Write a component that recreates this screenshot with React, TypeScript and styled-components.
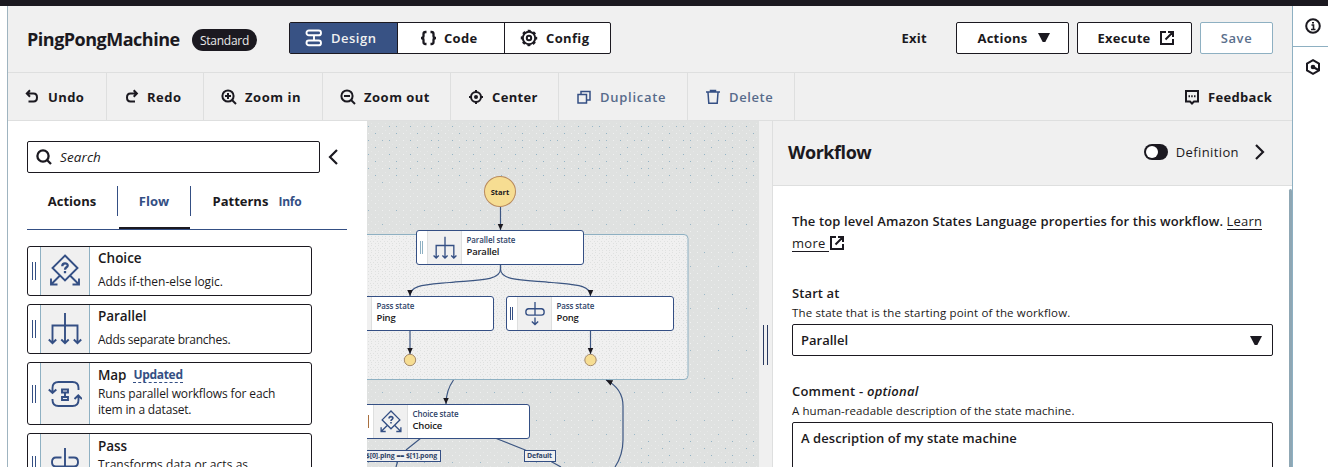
import React from "react";
import styled, { createGlobalStyle, css } from "styled-components";

const ink = "#1b1920";
const navy = "#344f84";
const mist = "#8eb0c2";
const panel = "#f0f0f0";
const line = "#dedfdf";

const GlobalStyle = createGlobalStyle`
  * { box-sizing: border-box; }
  html, body { margin: 0; padding: 0; }
  body {
    width: 1328px; height: 467px; overflow: hidden; background: #fff; color: ${ink};
    font-family: "Open Sans", "Noto Sans", sans-serif;
  }
  svg { display: block; flex: none; }
`;

const Text = styled.span<{ $size?: number; $weight?: number; $track?: number; $color?: string; $italic?: boolean; $lh?: number }>`
  font-size: ${(p) => p.$size ?? 13}px;
  font-weight: ${(p) => p.$weight ?? 700};
  letter-spacing: ${(p) => p.$track ?? 0}px;
  color: ${(p) => p.$color ?? ink};
  font-style: ${(p) => (p.$italic ? "italic" : "normal")};
  line-height: ${(p) => p.$lh ?? 20}px;
  white-space: nowrap;
`;

const Page = styled.div`
  display: flex; flex-direction: column; width: 1328px; height: 467px; overflow: hidden;
`;
const TopStrip = styled.div`flex: 0 0 6px; background: ${ink};`;
const Columns = styled.div`display: flex; flex: 1; min-height: 0; padding-left: 7px;`;
const Studio = styled.main`
  display: flex; flex-direction: column; width: 1286px; min-height: 0;
  border-left: 1px solid #9fb4c0; border-right: 1px solid ${mist}; background: ${panel};
`;
const Rail = styled.aside`flex: 1; background: #fff;`;
const RailItem = styled.div<{ $ruled?: boolean }>`
  display: flex; align-items: center; justify-content: center; height: ${(p) => (p.$ruled ? 41 : 39)}px; padding-left: 5px;
  ${(p) => p.$ruled && css`border-bottom: 1px solid ${mist};`}
`;

const Header = styled.header`
  display: flex; align-items: center; flex: 0 0 67px; padding: 0 19px 3px 19px;
  border-bottom: 1px solid ${line};
`;
const Title = styled.h1`
  margin: 0; width: 165px; font-size: 18px; line-height: 24px; font-weight: 700; letter-spacing: -0.5px; white-space: nowrap;
  padding-top: 2px;
`;
const Badge = styled.span`
  display: flex; align-items: center; justify-content: center; width: 65px; height: 22px; margin-top: 4px; padding-top: 1px;
  border-radius: 11px; background: ${ink}; color: #e9e9e9; font-size: 12px; letter-spacing: -0.25px;
`;
const Segments = styled.div`
  display: flex; height: 32px; width: 322px; margin-left: 32px; border: 1px solid ${ink}; border-radius: 2px; background: #fff;
`;
const Segment = styled.button<{ $w: number; $active?: boolean }>`
  display: flex; align-items: center; gap: 8px; width: ${(p) => p.$w}px; padding: 0 0 0 15px; border: 0;
  color: ${ink}; font-family: inherit; background: ${(p) => (p.$active ? "#385284" : "transparent")};
  & + & { border-left: 1px solid ${ink}; }
`;
const HeaderActions = styled.div`display: flex; align-items: center; gap: 8px; margin-left: auto;`;
const Exit = styled.div`margin-right: 21px; display: flex;`;
const Button = styled.button<{ $w: number; $muted?: boolean; $gap?: number; $inset?: number }>`
  display: flex; align-items: center; justify-content: center; gap: ${(p) => p.$gap ?? 9}px; width: ${(p) => p.$w}px; height: 32px;
  padding: 0 0 0 ${(p) => p.$inset ?? 0}px;
  background: #fff; border: 1px solid ${(p) => (p.$muted ? mist : ink)}; border-radius: 2px; font-family: inherit;
`;

const Toolbar = styled.nav`
  display: flex; flex: 0 0 48px; border-bottom: 1px solid ${line};
`;
const Tool = styled.div<{ $w: number; $gap?: number }>`
  display: flex; align-items: center; gap: ${(p) => p.$gap ?? 8}px; flex: 0 0 ${(p) => p.$w}px; padding: 1px 0 0 17px; border-right: 1px solid ${line};
`;
const Feedback = styled.div`display: flex; align-items: center; gap: 8px; margin-left: auto; padding: 1px 20px 0 0;`;

const Body = styled.div`display: flex; flex: 1; min-height: 0;`;
const Library = styled.section`flex: 0 0 359px; background: #fff; padding: 20px 20px 0 19px; overflow: hidden;`;
const SearchRow = styled.div`display: flex; align-items: center; gap: 8px;`;
const SearchBox = styled.div`
  display: flex; align-items: center; gap: 8px; width: 293px; height: 32px; padding-left: 8px;
  border: 1px solid ${ink}; border-radius: 2px;
`;
const Tabs = styled.div`
  display: flex; height: 57px; border-bottom: 1px solid ${navy}; padding-top: 13px; width: 320px;
`;
const Tab = styled.div<{ $w: number; $active?: boolean }>`
  display: flex; align-items: flex-start; justify-content: center; width: ${(p) => p.$w}px; padding-top: 5px; gap: 10px;
  background-image: ${(p) => (p.$active
    ? `linear-gradient(${navy}, ${navy}), linear-gradient(${navy}, ${navy}), linear-gradient(${ink}, ${ink})`
    : "none")};
  background-repeat: no-repeat;
  background-size: 1px 30px, 1px 30px, 71px 2px;
  background-position: 0 0, 100% 0, 2px 100%;
`;
const Cards = styled.div`display: flex; flex-direction: column; gap: 8px; margin-top: 16px;`;
const Card = styled.article<{ $h: number }>`
  display: flex; flex: none; width: 285px; height: ${(p) => p.$h}px; border: 1px solid ${ink}; border-radius: 3px; overflow: hidden;
`;
const Grip = styled.div<{ $gap?: number; $h?: number; $color?: string }>`
  width: ${(p) => (p.$gap ?? 2) + 2}px; height: ${(p) => p.$h ?? 18}px;
  border-left: 1px solid ${(p) => p.$color ?? navy}; border-right: 1px solid ${(p) => p.$color ?? navy};
`;
const GripCell = styled.div`display: flex; flex: 0 0 12px; align-items: center; padding-left: 4px;`;
const IconCell = styled.div`
  display: flex; flex: 0 0 50px; align-items: center; justify-content: center; background: ${panel};
  border-left: 1px solid ${mist}; border-right: 1px solid ${mist};
`;
const CardText = styled.div<{ $tight?: boolean }>`
  display: flex; flex-direction: column; gap: ${(p) => (p.$tight ? 2 : 4)}px; padding: ${(p) => (p.$tight ? 2 : 1)}px 0 0 8px;
`;
const CardTitle = styled.div`display: flex; align-items: center; gap: 8px; height: 19px;`;
const Updated = styled.span`
  color: ${navy}; font-size: 12px; font-weight: 700; line-height: 14px; border-bottom: 1px dashed ${navy};
  letter-spacing: -0.3px; margin: 2px 0 0 -1px;
`;

const Canvas = styled.section`position: relative; flex: 0 0 392px; overflow: hidden; background: #dfe1e0;`;
const Layer = styled.svg`position: absolute; inset: 0;`;
const Node = styled.div<{ $x: number; $y: number }>`
  position: absolute; left: ${(p) => p.$x}px; top: ${(p) => p.$y}px; width: 168px; height: 35px;
  display: flex; background: #fff; border: 1px solid ${navy}; border-radius: 3px; overflow: hidden;
`;
const NodeGrip = styled.div`display: flex; align-items: center; flex: 0 0 10px; padding-left: 3px;`;
const NodeIcon = styled.div`
  display: flex; flex: 0 0 35px; align-items: center; justify-content: center; background: ${panel};
  border: solid ${line}; border-width: 0 1px;
`;
const NodeText = styled.div`display: flex; flex-direction: column; padding: 3px 0 0 4.5px;`;
const Start = styled.div`
  position: absolute; left: 117px; top: 55px; width: 32px; height: 31px; border-radius: 50%;
  display: flex; align-items: center; justify-content: center; background: #f6dd92; border: 1px solid #b98a5c;
`;
const EdgeLabel = styled.div<{ $x: number; $w: number }>`
  position: absolute; left: ${(p) => p.$x}px; top: 329px; width: ${(p) => p.$w}px; height: 12px;
  display: flex; align-items: center; justify-content: flex-end; padding-right: 3px; background: ${panel}; border: 1px solid ${navy};
`;

const Splitter = styled.div`
  display: flex; flex: 0 0 14px; justify-content: center; padding: 204px 2px 0 2px; background: ${panel}; border-right: 1px solid ${line};
`;
const Inspector = styled.section`display: flex; flex-direction: column; flex: 1; min-width: 0; background: #fff;`;
const InspectorHead = styled.div`
  display: flex; align-items: center; flex: 0 0 65px; padding: 0 26px 2px 15px; background: ${panel}; border-bottom: 1px solid ${line};
`;
const HeadRight = styled.div`display: flex; align-items: center; margin-left: auto; gap: 8px;`;
const Toggle = styled.span`
  display: flex; width: 24px; height: 16px; padding: 2px; border-radius: 8px; background: ${ink};
  &::before { content: ""; width: 12px; height: 12px; border-radius: 50%; background: #fff; }
`;
const Scroller = styled.div`display: flex; flex: 1; min-height: 0; overflow: hidden;`;
const Fields = styled.div`flex: 1; padding: 24px 0 0 19px;`;
const ScrollThumb = styled.div`flex: 0 0 3px; margin-top: 3px; background: #8fa7b4; border-radius: 2px 2px 0 0;`;
const Paragraph = styled.p`margin: 0 0 29px; line-height: 22px; display: flex; flex-direction: column;`;
const ParaLine = styled.span<{ $gap: number }>`display: flex; align-items: center; height: 22px; gap: ${(p) => p.$gap}px;`;
const Link = styled.span`border-bottom: 1px solid ${ink}; display: inline-flex; height: 18px; align-items: center;`;
const Field = styled.div`display: flex; flex-direction: column; width: 481px; margin-bottom: 25px;`;
const Select = styled.div`
  display: flex; align-items: center; justify-content: space-between; height: 32px; padding: 0 10px 0 8px; margin-top: 2px;
  border: 1px solid ${ink}; border-radius: 2px;
`;
const TextArea = styled.div`height: 80px; margin-top: 2px; padding: 3px 8px; border: 1px solid ${ink}; border-radius: 2px;`;

type IconProps = { size?: number; color?: string; width?: number };
const Glyph = ({ size = 16, color = ink, width = 2, children }: IconProps & { children: React.ReactNode }) => (
  <svg width={size} height={size} viewBox="0 0 16 16" fill="none" stroke={color} strokeWidth={width}>{children}</svg>
);
const External = () => (
  <Glyph><path d="M7 2H2v12h12V9M9 2h5v5M14 2 6.500 9.500" /></Glyph>
);
const Caret = () => (<svg width="12" height="9"><path d="M0 0h12L7.300 9H4.700z" fill={ink} /></svg>);
const Magnifier = ({ width = 2, children }: { width?: number; children?: React.ReactNode }) => (
  <Glyph width={width}><circle cx="7" cy="7" r="5.600" /><path d="m11 11 4 4" />{children}</Glyph>
);

const ParallelArt = ({ s = 34 }: { s?: number }) => (
  <svg width={s} height={s} viewBox="0 0 34 34" fill="none" stroke={navy} strokeWidth="1.900">
    <path d="M17 1v30M4.500 31V13.500h25V31M.8 27.500l3.700 3.700 3.700-3.700M13.300 27.500l3.700 3.700 3.700-3.700M25.800 27.500l3.700 3.700 3.700-3.700" />
  </svg>
);
const ChoiceArt = ({ s = 34 }: { s?: number }) => (
  <svg width={s} height={s} viewBox="0 0 34 34" fill="none" stroke={navy} strokeWidth="1.900">
    <path d="M17 1.500 29.500 14 17 26.500 4.500 14zM12 21.500l-9 9M3 24.500v6h6.500M22 21.500l9 9M31 24.500v6h-6.500" />
    <path d="M14.300 12.200c0-3.700 5.400-3.500 5.400-.8 0 2-2.700 1.700-2.700 4.300M17 17v2.200" strokeWidth="2.300" />
  </svg>
);
const MapArt = () => (
  <svg width="34" height="34" viewBox="0 0 34 34" fill="none" stroke={navy} strokeWidth="1.900">
    <path d="M30.500 13V11q0-6-6-6H10.500q-6 0-6 6v4.500M.8 12.500l3.700 3.500 3.800-3.500M4.500 22v1q0 6 6 6h14q6 0 6-6V18M26.500 22l3.800-3.700L34 22" />
    <path d="M14 12.500h6v3h-6zM14 20h6v3h-6zM17 15.500V20" />
  </svg>
);
const PassArt = ({ s = 34, closed }: { s?: number; closed?: boolean }) => (
  <svg width={s} height={s} viewBox="0 0 34 34" fill="none" stroke={navy} strokeWidth="1.900">
    <path d={closed
      ? "M17 0v18.500M8 9.500q-4 0-4 4.500t4 4.500h18q4 0 4-4.500t-4-4.500zM17 22v10M12.500 27.500 17 32l4.500-4.500"
      : "M17 0v18.500M13.500 9.500H8q-4 0-4 4.500t4 4.500h18q4 0 4-4.500t-4-4.500h-5.500M17 22v10M12.500 27.500 17 32l4.500-4.500"} />
  </svg>
);

const tools = [
  { label: "Undo", w: 99, gap: 7, track: 0.4, icon: <Glyph><path d="M2 4.500h6.500Q12 4.500 12 8.500t-3.500 4H3.500M5 1.200 1.800 4.500 5 7.800" /></Glyph> },
  { label: "Redo", w: 97, gap: 7, track: 0.5, icon: <Glyph><path d="M12.500 4.500H6.500Q3 4.500 3 8.500t3.500 4H11M9.700 1.200l3.200 3.300-3.200 3.300" /></Glyph> },
  { label: "Zoom in", w: 119, track: 0.55, icon: <Magnifier><path d="M4 7h6M7 4v6" /></Magnifier> },
  { label: "Zoom out", w: 128, track: 0.5, icon: <Magnifier><path d="M4 7h6" /></Magnifier> },
  { label: "Center", w: 108, track: 0.35, icon: <Glyph><circle cx="8" cy="8" r="5" /><circle cx="8" cy="8" r="2" fill={ink} stroke="none" /><path d="M8 1v3M8 12v3M1 8h3M12 8h3" /></Glyph> },
  { label: "Duplicate", w: 129, track: 0.72, muted: true, icon: <Glyph color={navy} width={1.500}><path d="M2 5.500h8.500V14H2zM5 5.500V2.500h9V11h-3.500" /></Glyph> },
  { label: "Delete", w: 107, track: 0.6, muted: true, icon: <Glyph color={navy} width={1.500}><path d="M1 3h14M5.500 3V1.500h5V3M3 3.500l.8 10.700h8.400L13 3.500" /></Glyph> },
];

const Lines = styled.div`display: flex; flex-direction: column;`;

type StateNode = { x: number; y: number; kind: string; name: string; art: React.ReactNode; grip?: string };
const nodes: StateNode[] = [
  { x: 49, y: 109, kind: "Parallel state", name: "Parallel", art: <ParallelArt s={24} />, grip: mist },
  { x: -41, y: 175, kind: "Pass state", name: "Ping", art: <PassArt s={24} closed /> },
  { x: 139, y: 175, kind: "Pass state", name: "Pong", art: <PassArt s={24} closed /> },
  { x: -5, y: 283, kind: "Choice state", name: "Choice", art: <ChoiceArt s={24} />, grip: "#a9703f" },
];

type CardData = { title: string; h: number; art: React.ReactNode; lines: [string, number][]; badge?: string; track?: number };
const cards: CardData[] = [
  { title: "Choice", h: 50, art: <ChoiceArt />, lines: [["Adds if-then-else logic.", -0.03]] },
  { title: "Parallel", h: 50, art: <ParallelArt />, lines: [["Adds separate branches.", -0.26]], track: -0.05 },
  { title: "Map", h: 63, art: <MapArt />, lines: [["Runs parallel workflows for each", -0.13], ["item in a dataset.", -0.17]], badge: "Updated", track: -0.1 },
  { title: "Pass", h: 63, art: <PassArt />, lines: [["Transforms data or acts as", 0.06], ["placeholder.", 0]], track: -0.1 },
];

export default function App() {
  return (
    <>
      <GlobalStyle />
      <Page>
        <TopStrip />
        <Columns>
          <Studio>
            <Header>
              <Title>PingPongMachine</Title>
              <Badge>Standard</Badge>
              <Segments>
                <Segment $w={107} $active>
                  <svg width="18" height="18" viewBox="0 0 18 18" fill="none" stroke="#fff" strokeWidth="1.900">
                    <rect x="1.500" y="1.500" width="14.500" height="4.800" rx="2.400" /><rect x="1.500" y="11.500" width="14.500" height="4.800" rx="2.400" /><path d="M9 6v5.500" />
                  </svg>
                  <Text $color="#f0f0f0" $weight={600} $track={0.5}>Design</Text>
                </Segment>
                <Segment $w={107}>
                  <svg width="23" height="18" viewBox="-3 0 23 18" fill="none" stroke={ink} strokeWidth="2.300">
                    <path d="M10.500 3H9.500Q7.500 3 7.500 5v2q0 2-2.500 2 2.500 0 2.500 2v2q0 2 2 2h1M14.500 3h1q2 0 2 2v2q0 2 2.500 2-2.500 0-2.500 2v2q0 2-2 2h-1" />
                  </svg>
                  <Text $track={0.3}>Code</Text>
                </Segment>
                <Segment $w={106}>
                  <svg width="18" height="18" viewBox="0 0 18 18" fill="none" stroke={ink}>
                    <circle cx="9" cy="9" r="6.200" strokeWidth="2" /><circle cx="9" cy="9" r="7.400" strokeWidth="1.700" strokeDasharray="3 2.810" strokeDashoffset="1.500" />
                    <circle cx="9" cy="9" r="2.200" strokeWidth="2" />
                  </svg>
                  <Text $track={0.35}>Config</Text>
                </Segment>
              </Segments>
              <HeaderActions>
                <Exit><Text $track={0.3}>Exit</Text></Exit>
                <Button $w={113} $gap={10} $inset={2}><Text $track={0.25}>Actions</Text><Caret /></Button>
                <Button $w={115} $gap={8} $inset={3}><Text $track={0.3}>Execute</Text><External /></Button>
                <Button $w={73} $muted><Text $color="#5b6f8c" $weight={600} $track={0.65}>Save</Text></Button>
              </HeaderActions>
            </Header>
            <Toolbar>
              {tools.map((t) => (
                <Tool key={t.label} $w={t.w} $gap={t.gap}>
                  {t.icon}
                  <Text $track={t.track} $weight={t.muted ? 600 : 700} $color={t.muted ? "#576b8b" : ink}>{t.label}</Text>
                </Tool>
              ))}
              <Feedback>
                <Glyph><path d="M2 2h12v10.500h-4l-2 2-2-2H2zM4.500 7.200h1.500M7.200 7.200h1.500M10 7.200h1.500" /></Glyph>
                <Text $track={0.3}>Feedback</Text>
              </Feedback>
            </Toolbar>
            <Body>
              <Library>
                <SearchRow>
                  <SearchBox>
                    <Magnifier width={2.300} />
                    <Text $italic $weight={500} $size={13.5} $track={0.1}>Search</Text>
                  </SearchBox>
                  <svg width="11" height="16" fill="none" stroke={ink} strokeWidth="2.200"><path d="M9 1 2 8l7 7" /></svg>
                </SearchRow>
                <Tabs>
                  <Tab $w={90}><Text>Actions</Text></Tab>
                  <Tab $w={74} $active><Text $color={navy} $track={0.1}>Flow</Text></Tab>
                  <Tab $w={132}><Text>Patterns</Text><Text $size={12} $lh={22} $color={navy} $track={-0.2}>Info</Text></Tab>
                </Tabs>
                <Cards>
                  {cards.map((c) => (
                    <Card key={c.title} $h={c.h}>
                      <GripCell><Grip /></GripCell>
                      <IconCell>{c.art}</IconCell>
                      <CardText $tight={c.lines.length > 1}>
                        <CardTitle>
                          <Text $weight={600} $size={13.5} $track={c.track}>{c.title}</Text>
                          {c.badge && <Updated>{c.badge}</Updated>}
                        </CardTitle>
                        <Lines>
                          {c.lines.map(([label, track]) => (
                            <Text key={label} $size={12} $weight={500} $track={track} $lh={c.lines.length > 1 ? 16 : 21}>{label}</Text>
                          ))}
                        </Lines>
                      </CardText>
                    </Card>
                  ))}
                </Cards>
              </Library>
              <Canvas>
                <Layer width="392" height="346" viewBox="367 121 392 346">
                  <defs>
                    <pattern id="dots" width="7" height="7" patternUnits="userSpaceOnUse" x="368" y="126">
                      <rect width="1" height="1" fill="#f0f1f1" />
                      <rect x="3" y="4" width="1" height="1" fill="#e7e8e8" />
                    </pattern>
                    <pattern id="bluedots" width="28" height="42" patternUnits="userSpaceOnUse" x="368" y="126">
                      <rect width="1" height="1" fill="#9bb8c8" /><rect x="14" y="14" width="1" height="1" fill="#9bb8c8" />
                    </pattern>
                    <pattern id="bluedense" width="21" height="14" patternUnits="userSpaceOnUse" x="368" y="126">
                      <rect width="1" height="1" fill="#93b3c5" /><rect x="7" y="7" width="1" height="1" fill="#93b3c5" />
                    </pattern>
                    <pattern id="grain" width="7" height="7" patternUnits="userSpaceOnUse">
                      <path d="M0 0h1v1H0zM4 1h1v1H4zM2 3h1v1H2zM6 3h1v1H6zM0 5h1v1H0zM4 5h1v1H4z" fill="#dfe1e0" />
                    </pattern>
                    <marker id="tip" markerWidth="7" markerHeight="7" refX="6.500" refY="3" orient="auto" markerUnits="userSpaceOnUse">
                      <path d="M0 0 6.500 3 0 6z" fill={ink} />
                    </marker>
                  </defs>
                  <rect x="367" y="121" width="392" height="346" fill="url(#dots)" />
                  <rect x="367" y="121" width="392" height="346" fill="url(#bluedots)" />
                  <rect x="367" y="121" width="392" height="56" fill="url(#bluedense)" />
                  <rect x="640" y="436" width="119" height="31" fill="url(#bluedense)" />
                  <rect x="310" y="234.500" width="378" height="145" rx="4" fill={panel} />
                  <rect x="310" y="234.500" width="378" height="145" rx="4" fill="url(#grain)" stroke={mist} />
                  <g fill="none" stroke="#3c5682" strokeWidth="1.200">
                    <path d="M500.500 207V230" markerEnd="url(#tip)" />
                    <path d="M500.500 265v4c0 12-24 11-51 13.500C424 285 410 285 410 296" markerEnd="url(#tip)" />
                    <path d="M500.500 265v4c0 12 24 11 51 13.500C577 285 590.500 285 590.500 296" markerEnd="url(#tip)" />
                    <path d="M410 330v24" markerEnd="url(#tip)" />
                    <path d="M590.500 330v24" markerEnd="url(#tip)" />
                    <path d="M453.500 380c-5 7-7.500 14-7.500 24" markerEnd="url(#tip)" />
                    <path d="M615 467c6-9 8-17 8-27V406c0-12-5-20-17-26" markerEnd="url(#tip)" />
                    <path d="M421 438 406 450M397.500 462l-1.500 5M495 438l29 11.500 28 12.500 9 5" />
                  </g>
                  <g fill="#f6dd92" stroke="#a58a6a">
                    <circle cx="410" cy="360" r="5.700" /><circle cx="590.500" cy="360" r="5.700" />
                  </g>
                </Layer>
                <Start><Text $size={7.5} $lh={10}>Start</Text></Start>
                {nodes.map((n) => (
                  <Node key={n.name} $x={n.x} $y={n.y}>
                    <NodeGrip><Grip $gap={1} $h={13} $color={n.grip} /></NodeGrip>
                    <NodeIcon>{n.art}</NodeIcon>
                    <NodeText>
                      <Text $size={8} $weight={600} $lh={12} $track={-0.12} $color="#2f4468">{n.kind}</Text>
                      <Text $size={9.5} $weight={600} $lh={12} $track={-0.2}>{n.name}</Text>
                    </NodeText>
                  </Node>
                ))}
                <EdgeLabel $x={-20} $w={94}><Text $size={7} $lh={10} $weight={700} $track={-0.1} $color="#2f4468">$[0].ping == $[1].pong</Text></EdgeLabel>
                <EdgeLabel $x={157} $w={32}><Text $size={7} $lh={10} $weight={700} $track={-0.15} $color="#2f4468">Default</Text></EdgeLabel>
              </Canvas>
              <Splitter><Grip $gap={3} $h={40} $color="#2a3a60" /></Splitter>
              <Inspector>
                <InspectorHead>
                  <Text $size={18} $lh={24} $track={-0.45}>Workflow</Text>
                  <HeadRight>
                    <Toggle /><Text $weight={500} $track={0.4}>Definition</Text>
                    <svg width="19" height="16" fill="none" stroke={ink} strokeWidth="2.200"><path d="m9 1 7 7-7 7" /></svg>
                  </HeadRight>
                </InspectorHead>
                <Scroller>
                  <Fields>
                    <Paragraph>
                      <ParaLine $gap={3.5}>
                        <Text $weight={600} $track={0.12}>The top level Amazon States Language properties for this workflow.</Text>
                        <Link><Text $weight={500} $track={0.2}>Learn</Text></Link>
                      </ParaLine>
                      <ParaLine $gap={0}><Link><Text $weight={500} $track={0.3}>more&nbsp;</Text></Link><External /></ParaLine>
                    </Paragraph>
                    <Field>
                      <Text $weight={600} $lh={21} $track={0.1}>Start at</Text>
                      <Text $size={11.5} $weight={500} $lh={18} $track={0.15}>The state that is the starting point of the workflow.</Text>
                      <Select><Text $weight={600}>Parallel</Text><Caret /></Select>
                    </Field>
                    <Field>
                      <Text $weight={600} $lh={21} $track={0.22}>Comment - <Text as="i" $italic $weight={600} $track={0.22}>optional</Text></Text>
                      <Text $size={11.5} $weight={500} $lh={18} $track={0.08}>A human-readable description of the state machine.</Text>
                      <TextArea><Text $weight={600} $track={0.06}>A description of my state machine</Text></TextArea>
                    </Field>
                  </Fields>
                  <ScrollThumb />
                </Scroller>
              </Inspector>
            </Body>
          </Studio>
          <Rail>
            <RailItem $ruled>
              <Glyph><circle cx="8" cy="8" r="6.800" /><path d="M6.500 7h2v4.500M6 11.500h4.500" strokeWidth="1.600" /><path d="M7 4h2v1.600H7z" fill={ink} stroke="none" /></Glyph>
            </RailItem>
            <RailItem>
              <Glyph><path d="M8 1.200 14 4.600v6.800L8 14.800 2 11.400V4.600z" /><circle cx="8" cy="8" r="2.300" fill={ink} stroke="none" /><path d="m8 8 5.500 3" /></Glyph>
            </RailItem>
          </Rail>
        </Columns>
      </Page>
    </>
  );
}
